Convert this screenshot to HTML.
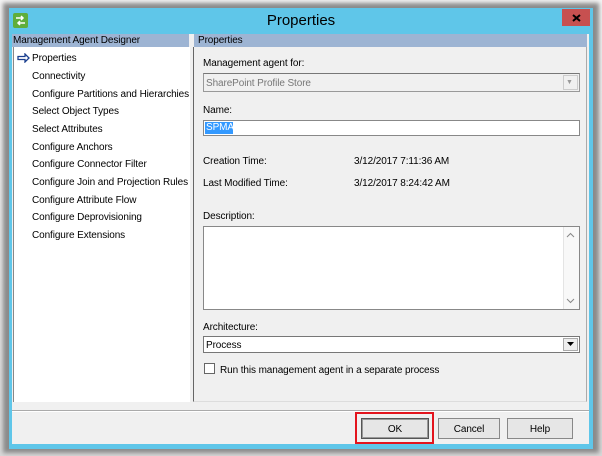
<!DOCTYPE html>
<html><head><meta charset="utf-8"><style>
*{margin:0;padding:0;box-sizing:border-box}
body{width:602px;height:456px;overflow:hidden;background:#e8e8e8;font-family:"Liberation Sans",sans-serif;font-size:10px;color:#000;position:relative}
.a{position:absolute}
.t{position:absolute;white-space:nowrap;letter-spacing:-0.1px;transform:translateY(1px)}
</style></head><body>
<div class="a" style="left:0;top:0;width:602px;height:456px;background:linear-gradient(#f4f4f4,#d8d8d8)"></div>
<div class="a" style="left:3px;top:3px;width:596px;height:450px;background:#8a8a8a;filter:blur(2px)"></div>
<div class="a" style="left:9px;top:8px;width:584px;height:441px;background:#5fc6e9"></div>
<div class="a" style="left:13px;top:13px;width:15px;height:15px;background:#5fae3a;border-radius:2px"></div>
<svg class="a" style="left:14px;top:15px" width="13" height="11"><path d="M2 3h7M7 1l2 2-2 2M11 8H4M6 6l-2 2 2 2" stroke="#fff" stroke-width="1.5" fill="none"/></svg>
<div class="t" style="left:0;width:602px;text-align:center;top:11px;font-size:15px;letter-spacing:0">Properties</div>
<div class="a" style="left:562px;top:9px;width:28px;height:17px;background:#c75050"></div>
<svg class="a" style="left:572px;top:14px" width="9" height="8"><path d="M1 1l7 6M8 1l-7 6" stroke="#000" stroke-width="2"/></svg>
<div class="a" style="left:12px;top:34px;width:577px;height:410px;background:#f0f0f0"></div>
<div class="a" style="left:12px;top:34px;width:177px;height:13px;background:#9db4d3"></div>
<div class="t" style="left:13px;top:34px">Management Agent Designer</div>
<div class="a" style="left:194px;top:34px;width:393px;height:13px;background:#9db4d3"></div>
<div class="t" style="left:198px;top:34px">Properties</div>
<div class="a" style="left:13px;top:47px;width:177px;height:355px;background:#fff;border-left:1px solid #888"></div>
<div class="a" style="left:193px;top:47px;width:394px;height:355px;border-left:1px solid #666;border-right:1px solid #aaa;border-bottom:1px solid #ddd"></div>
<svg class="a" style="left:17px;top:53px" width="13" height="10"><path d="M1 3.5h7V1l4 4-4 4V6.5H1z" fill="#fff" stroke="#1a3f8f" stroke-width="1.3"/></svg>
<div class="t" style="left:32px;top:52px">Properties</div>
<div class="t" style="left:32px;top:70px">Connectivity</div>
<div class="t" style="left:32px;top:88px">Configure Partitions and Hierarchies</div>
<div class="t" style="left:32px;top:105px">Select Object Types</div>
<div class="t" style="left:32px;top:123px">Select Attributes</div>
<div class="t" style="left:32px;top:141px">Configure Anchors</div>
<div class="t" style="left:32px;top:158px">Configure Connector Filter</div>
<div class="t" style="left:32px;top:176px">Configure Join and Projection Rules</div>
<div class="t" style="left:32px;top:194px">Configure Attribute Flow</div>
<div class="t" style="left:32px;top:211px">Configure Deprovisioning</div>
<div class="t" style="left:32px;top:229px">Configure Extensions</div>

<div class="t" style="left:203px;top:57px">Management agent for:</div>
<div class="a" style="left:203px;top:73px;width:377px;height:19px;border:1px solid #999;border-top-color:#777;background:#f0f0f0"></div>
<div class="t" style="left:206px;top:77px;color:#777">SharePoint Profile Store</div>
<div class="a" style="left:563px;top:75px;width:15px;height:15px;border:1px solid #ccc"></div>
<div class="t" style="left:566px;top:78px;color:#999;font-size:7px">&#9660;</div>
<div class="t" style="left:203px;top:104px">Name:</div>
<div class="a" style="left:203px;top:120px;width:377px;height:16px;border:1px solid #888;background:#fff"></div>
<div class="a" style="left:205px;top:122px;width:28px;height:12px;background:#3399ff"></div>
<div class="t" style="left:206px;top:121px;color:#fff">SPMA</div>
<div class="t" style="left:203px;top:155px">Creation Time:</div>
<div class="t" style="left:354px;top:155px">3/12/2017 7:11:36 AM</div>
<div class="t" style="left:203px;top:177px">Last Modified Time:</div>
<div class="t" style="left:354px;top:177px">3/12/2017 8:24:42 AM</div>
<div class="t" style="left:203px;top:210px">Description:</div>
<div class="a" style="left:203px;top:226px;width:377px;height:84px;border:1px solid #888;background:#fff"></div>
<div class="a" style="left:563px;top:227px;width:16px;height:82px;background:#f8f8f8;border-left:1px solid #e4e4e4"></div>
<svg class="a" style="left:566px;top:232px" width="9" height="6"><path d="M1 5l3.5-3.5L8 5" stroke="#888" fill="none"/></svg>
<svg class="a" style="left:566px;top:298px" width="9" height="6"><path d="M1 1l3.5 3.5L8 1" stroke="#888" fill="none"/></svg>
<div class="t" style="left:203px;top:321px">Architecture:</div>
<div class="a" style="left:203px;top:336px;width:377px;height:17px;border:1px solid #777;background:#fff"></div>
<div class="t" style="left:206px;top:339px">Process</div>
<div class="a" style="left:563px;top:338px;width:15px;height:13px;background:#eee;border:1px solid #aaa"></div>
<svg class="a" style="left:567px;top:342px" width="8" height="5"><path d="M0 0h7L3.5 4z" fill="#000"/></svg>
<div class="a" style="left:204px;top:363px;width:11px;height:11px;border:1px solid #666;background:#fff"></div>
<div class="t" style="left:220px;top:364px">Run this management agent in a separate process</div>

<div class="a" style="left:12px;top:410px;width:577px;height:1px;background:#aaa"></div>
<div class="a" style="left:12px;top:411px;width:577px;height:1px;background:#fff"></div>
<div class="a" style="left:355px;top:412px;width:79px;height:32px;border:2px solid #e3141d"></div>
<div class="a" style="left:361px;top:418px;width:68px;height:21px;border:1px solid #555;background:#e6e6e6;box-shadow:inset 0 0 0 1px #999"></div>
<div class="t" style="left:361px;width:68px;text-align:center;top:423px">OK</div>
<div class="a" style="left:438px;top:418px;width:62px;height:21px;border:1px solid #888;background:#e6e6e6"></div>
<div class="t" style="left:438px;width:62px;text-align:center;top:423px">Cancel</div>
<div class="a" style="left:507px;top:418px;width:66px;height:21px;border:1px solid #888;background:#e6e6e6"></div>
<div class="t" style="left:507px;width:66px;text-align:center;top:423px">Help</div>
</body></html>
